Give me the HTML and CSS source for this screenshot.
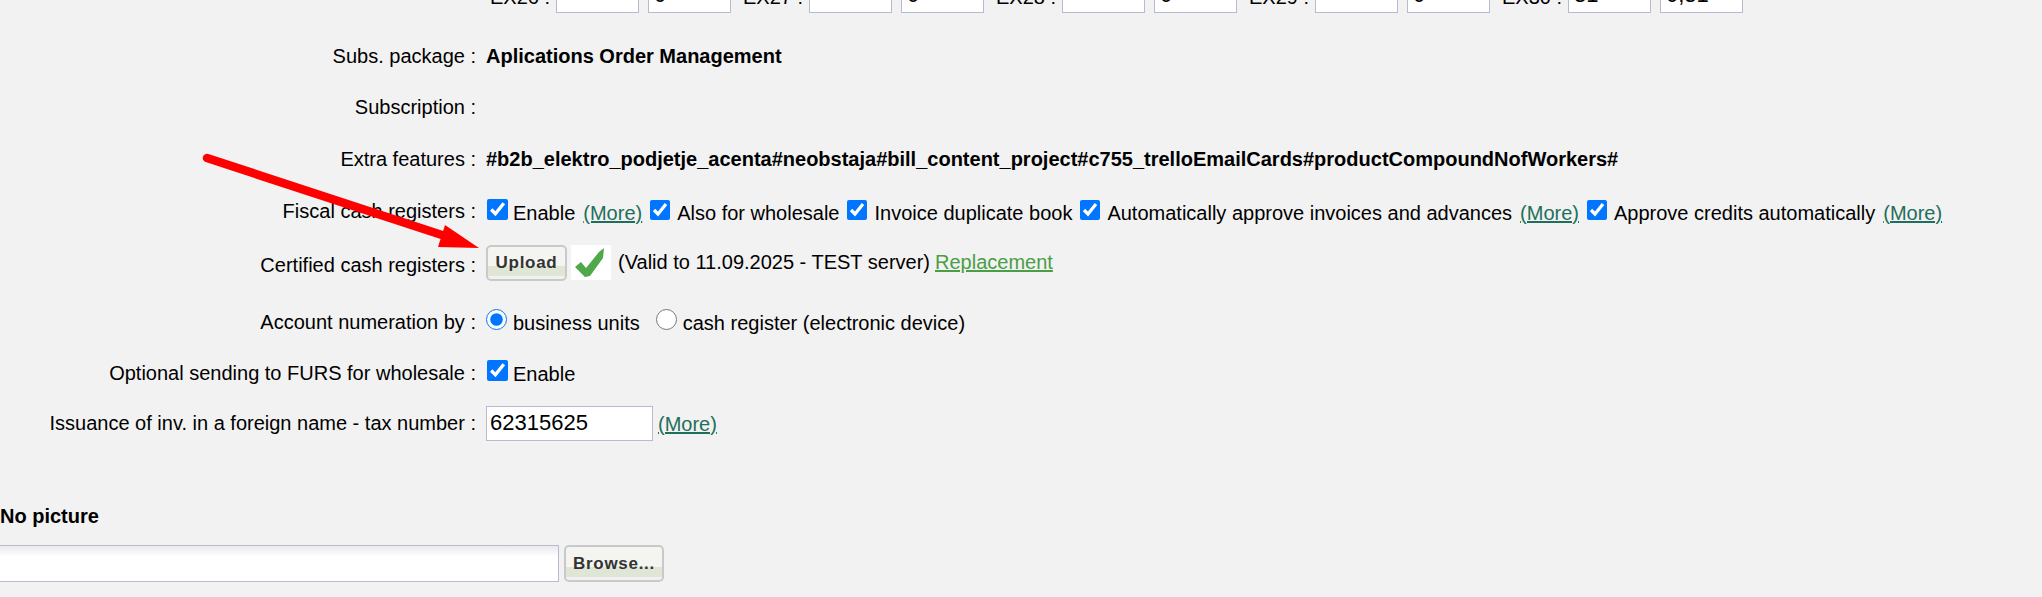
FILE: index.html
```html
<!DOCTYPE html>
<html lang="en">
<head>
<meta charset="UTF-8" />
<title>Settings</title>
<link rel="stylesheet" href="styles.css">
</head>
<body>
  <div class="ex-row">
    <span class="ex-label">EX26 :</span><input class="ex-input" type="text" /><input class="ex-input" type="text" value="0" />
    <span class="ex-label">EX27 :</span><input class="ex-input" type="text" /><input class="ex-input" type="text" value="0" />
    <span class="ex-label">EX28 :</span><input class="ex-input" type="text" /><input class="ex-input" type="text" value="0" />
    <span class="ex-label">EX29 :</span><input class="ex-input" type="text" /><input class="ex-input" type="text" value="0" />
    <span class="ex-label">EX30 :</span><input class="ex-input" type="text" value="31" /><input class="ex-input" type="text" value="0,31" />
  </div>

  <div class="form">
    <div class="row r-subs">
      <div class="lbl">Subs. package :</div>
      <div class="val"><b>Aplications Order Management</b></div>
    </div>
    <div class="row r-sub">
      <div class="lbl">Subscription :</div>
      <div class="val"></div>
    </div>
    <div class="row r-extra">
      <div class="lbl">Extra features :</div>
      <div class="val"><b>#b2b_elektro_podjetje_acenta#neobstaja#bill_content_project#c755_trelloEmailCards#productCompoundNofWorkers#</b></div>
    </div>
    <div class="row r-fiscal">
      <div class="lbl">Fiscal cash registers :</div>
      <div class="val">
        <input class="chk first" type="checkbox" checked /><span class="opt">Enable</span><a class="more" href="#">(More)</a>
        <input class="chk" type="checkbox" checked /><span class="opt">Also for wholesale</span>
        <input class="chk" type="checkbox" checked /><span class="opt">Invoice duplicate book</span>
        <input class="chk" type="checkbox" checked /><span class="opt">Automatically approve invoices and advances</span><a class="more" href="#">(More)</a>
        <input class="chk" type="checkbox" checked /><span class="opt">Approve credits automatically</span><a class="more" href="#">(More)</a>
      </div>
    </div>
    <div class="row r-cert">
      <div class="lbl">Certified cash registers :</div>
      <div class="val">
        <button class="btn btn-upload">Upload</button>
        <span class="ok-icon">
          <svg width="40" height="35" viewBox="0 0 40 35"><path d="M4 22 L10 17 L15 23 L28 7 L33 3 L32 13 L19 31 L14 32 Z" fill="#4fa84a"/></svg>
        </span>
        <span class="valid">(Valid to 11.09.2025 - TEST server)</span>
        <a class="replace" href="#">Replacement</a>
      </div>
    </div>
    <div class="row r-acc">
      <div class="lbl">Account numeration by :</div>
      <div class="val">
        <input class="rad" type="radio" name="num" checked /><span class="opt">business units</span>
        <input class="rad second" type="radio" name="num" /><span class="opt">cash register (electronic device)</span>
      </div>
    </div>
    <div class="row r-opt">
      <div class="lbl">Optional sending to FURS for wholesale :</div>
      <div class="val"><input class="chk first" type="checkbox" checked /><span class="opt">Enable</span></div>
    </div>
    <div class="row r-iss">
      <div class="lbl">Issuance of inv. in a foreign name - tax number :</div>
      <div class="val"><input class="tax" type="text" value="62315625" /><a class="more" href="#">(More)</a></div>
    </div>
  </div>

  <div class="pic-title">No picture</div>
  <div class="pic-row">
    <input class="file-name" type="text" />
    <button class="btn btn-browse">Browse...</button>
  </div>

  <svg class="arrow" width="300" height="110" viewBox="200 150 300 110">
    <path d="M207 158 L445 236" stroke="#fe0000" stroke-width="8.5" stroke-linecap="round" fill="none"/>
    <path d="M445 225 L479 248 L438 247 Z" fill="#fe0000"/>
  </svg>
</body>
</html>
```

FILE: styles.css
```css
html, body {
  margin: 0;
  height: 597px;
  overflow: hidden;
}
body {
  background: #f2f2f2;
  color: #000;
  font-family: "Liberation Sans", Arial, sans-serif;
  font-size: 20px;
  position: relative;
}
.ex-row {
  display: flex;
  align-items: center;
  height: 35px;
  margin-top: -22px;
  padding-left: 490px;
}
.ex-label { width: 66px; white-space: nowrap; padding-top: 4px; }
.ex-input {
  box-sizing: border-box;
  width: 83px;
  height: 35px;
  margin-right: 9px;
  padding: 0 5px 2px;
  border: 1px solid #b9b9cf;
  background: #fff;
  font: inherit;
  font-size: 22px;
}
.ex-input:nth-of-type(2n) { margin-right: 12px; }

.row { display: flex; align-items: center; height: 35px; }
.lbl { width: 476px; text-align: right; white-space: pre; flex: none; }
.val { margin-left: 10px; display: flex; align-items: center; white-space: nowrap; }
.r-subs { margin-top: 26px; }
.r-sub { margin-top: 16px; }
.r-extra { margin-top: 17px; }
.r-fiscal { margin-top: 18px; }
.r-fiscal .lbl { padding-bottom: 2px; }
.r-cert { margin-top: 15px; }
.r-cert .lbl { padding-top: 6px; }
.r-acc { margin-top: 25px; }
.r-opt { margin-top: 16px; }
.r-iss { margin-top: 15px; }

.chk {
  width: 20px;
  height: 20px;
  margin: -6px 7px 0 8px;
  flex: none;
}
.chk.first { margin-left: 1px; margin-right: 5px; width: 21px; height: 21px; }
.rad {
  width: 21px;
  height: 21px;
  margin: -6px 6px 0 0;
  flex: none;
}
.rad.second { margin-left: 16px; }
.opt { padding-top: 2px; }
.more {
  margin-left: 8px;
  color: #1f6f5c;
  padding-top: 2px;
}
.r-iss .more { margin-left: 5px; }
.btn {
  box-sizing: border-box;
  border: 2px solid #c9c9c9;
  border-radius: 5px;
  background: linear-gradient(#f4f4f0 0, #f4f4f0 60%, #e0e6d6 60%, #e0e6d6 90%, #f1f1f1 90%);
  color: #333;
  font: bold 17px "Liberation Sans", Arial, sans-serif;
  letter-spacing: 0.7px;
}
.btn-upload { width: 81px; height: 36px; padding: 0; }
.ok-icon {
  display: block;
  width: 40px;
  height: 35px;
  margin-left: 4px;
  background: #fff;
}
.ok-icon svg { display: block; }
.valid { margin-left: 7px; }
.replace { margin-left: 5px; color: #4a9e45; }
.tax {
  box-sizing: border-box;
  width: 167px;
  height: 35px;
  padding: 0 3px 2px;
  border: 1px solid #b9b9cf;
  background: #fff;
  font: inherit;
  font-size: 22px;
}
.pic-title {
  margin-top: 64px;
  font-weight: bold;
}
.pic-row {
  display: flex;
  margin-top: 17px;
}
.file-name {
  box-sizing: border-box;
  width: 569px;
  height: 37px;
  margin-left: -10px;
  border: 1px solid #b9b9cf;
  background: linear-gradient(#e9e9ef 0, #fff 30%);
}
.btn-browse { width: 100px; height: 37px; margin-left: 5px; padding: 0; }
.arrow {
  position: absolute;
  left: 200px;
  top: 150px;
}
```
